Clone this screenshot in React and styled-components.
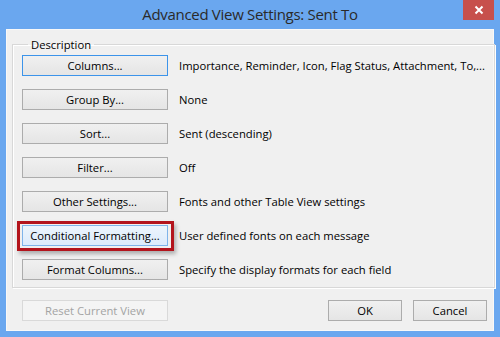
import styled, { createGlobalStyle, css } from "styled-components";

const Global = createGlobalStyle`
  html, body {
    margin: 0;
    padding: 0;
    background: #6aa7ef;
  }
  body {
    font-family: "Open Sans", "Noto Sans", sans-serif;
    font-size: 11.25px;
    color: #000;
  }
`;

const Window = styled.div`
  width: 500px;
  height: 337px;
  display: flex;
  flex-direction: column;
  background: #6aa7ef;
  box-sizing: border-box;
  padding: 0 6px 6px 6px;
`;

const TitleBar = styled.div`
  height: 29px;
  display: flex;
  align-items: center;
  justify-content: center;
  position: relative;
`;

const Title = styled.div`
  font-size: 15px;
  color: #2a2a2a;
  letter-spacing: -0.3px;
  margin-top: -2px;
`;

const CloseButton = styled.div`
  position: absolute;
  top: 0;
  right: 0;
  width: 31px;
  height: 20px;
  background: #c7504c;
  display: flex;
  align-items: center;
  justify-content: center;
`;

const Client = styled.div`
  flex: 1;
  background: #f0f0f0;
  border: 1px solid #f8f8f8;
  box-sizing: border-box;
  padding: 7px 6px 0 5px;
  display: flex;
  flex-direction: column;
`;

const Group = styled.fieldset`
  margin: 0;
  border: 1px solid #d8d8d8;
  box-shadow: inset 1px 1px 0 #fff, 1px 1px 0 #fff;
  padding: 3px 9px 7px 9px;
  display: flex;
  flex-direction: column;
  gap: 13px;
`;

const Legend = styled.legend`
  padding: 0 3px;
  margin-left: 6px;
  color: #000;
`;

const Row = styled.div`
  display: flex;
  align-items: center;
  gap: 11px;
`;

const Button = styled.div`
  width: ${({ w }) => w || 146}px;
  height: 21px;
  box-sizing: border-box;
  border: 1px solid #acacac;
  background: linear-gradient(#f0f0f0, #e5e5e5);
  display: flex;
  align-items: center;
  justify-content: center;
  color: #000;
  flex-shrink: 0;
  position: relative;
  ${({ focused }) =>
    focused &&
    css`
      border-color: #3c94ea;
    `}
  ${({ hover }) =>
    hover &&
    css`
      border-color: #7eb4ea;
      background: linear-gradient(#ecf4fc, #dcecfc);
    `}
  ${({ disabled }) =>
    disabled &&
    css`
      border-color: #d9d9d9;
      background: #f4f4f4;
      color: #a3a3a3;
    `}
`;

const Highlight = styled.div`
  position: absolute;
  left: -6px;
  right: -7px;
  top: -5px;
  bottom: -6px;
  border: 3px solid #b3141c;
  box-shadow: 2px 3px 4px rgba(0, 0, 0, 0.28);
  pointer-events: none;
`;

const Desc = styled.div`
  white-space: nowrap;
  color: #000;
`;

const Footer = styled.div`
  display: flex;
  align-items: center;
  padding: 12px 0 0 10px;
  gap: 11px;
`;

const Spacer = styled.div`
  flex: 1;
`;

const rows = [
  ["Columns...", "Importance, Reminder, Icon, Flag Status, Attachment, To,...", { focused: true }],
  ["Group By...", "None"],
  ["Sort...", "Sent (descending)"],
  ["Filter...", "Off"],
  ["Other Settings...", "Fonts and other Table View settings"],
  ["Conditional Formatting...", "User defined fonts on each message", { hover: true, marked: true }],
  ["Format Columns...", "Specify the display formats for each field"],
];

export default function App() {
  return (
    <>
      <Global />
      <Window>
        <TitleBar>
          <Title>Advanced View Settings: Sent To</Title>
          <CloseButton>
            <svg width="10" height="10" viewBox="0 0 10 10">
              <path d="M1.5 1.5 L8.5 8.5 M8.5 1.5 L1.5 8.5" stroke="#fff" strokeWidth="2" />
            </svg>
          </CloseButton>
        </TitleBar>
        <Client>
          <Group>
            <Legend>Description</Legend>
            {rows.map(([label, desc, opts = {}]) => (
              <Row key={label}>
                <Button focused={opts.focused} hover={opts.hover}>
                  {label}
                  {opts.marked && <Highlight />}
                </Button>
                <Desc>{desc}</Desc>
              </Row>
            ))}
          </Group>
          <Footer>
            <Button disabled>Reset Current View</Button>
            <Spacer />
            <Button w={74}>OK</Button>
            <Button w={74}>Cancel</Button>
          </Footer>
        </Client>
      </Window>
    </>
  );
}
